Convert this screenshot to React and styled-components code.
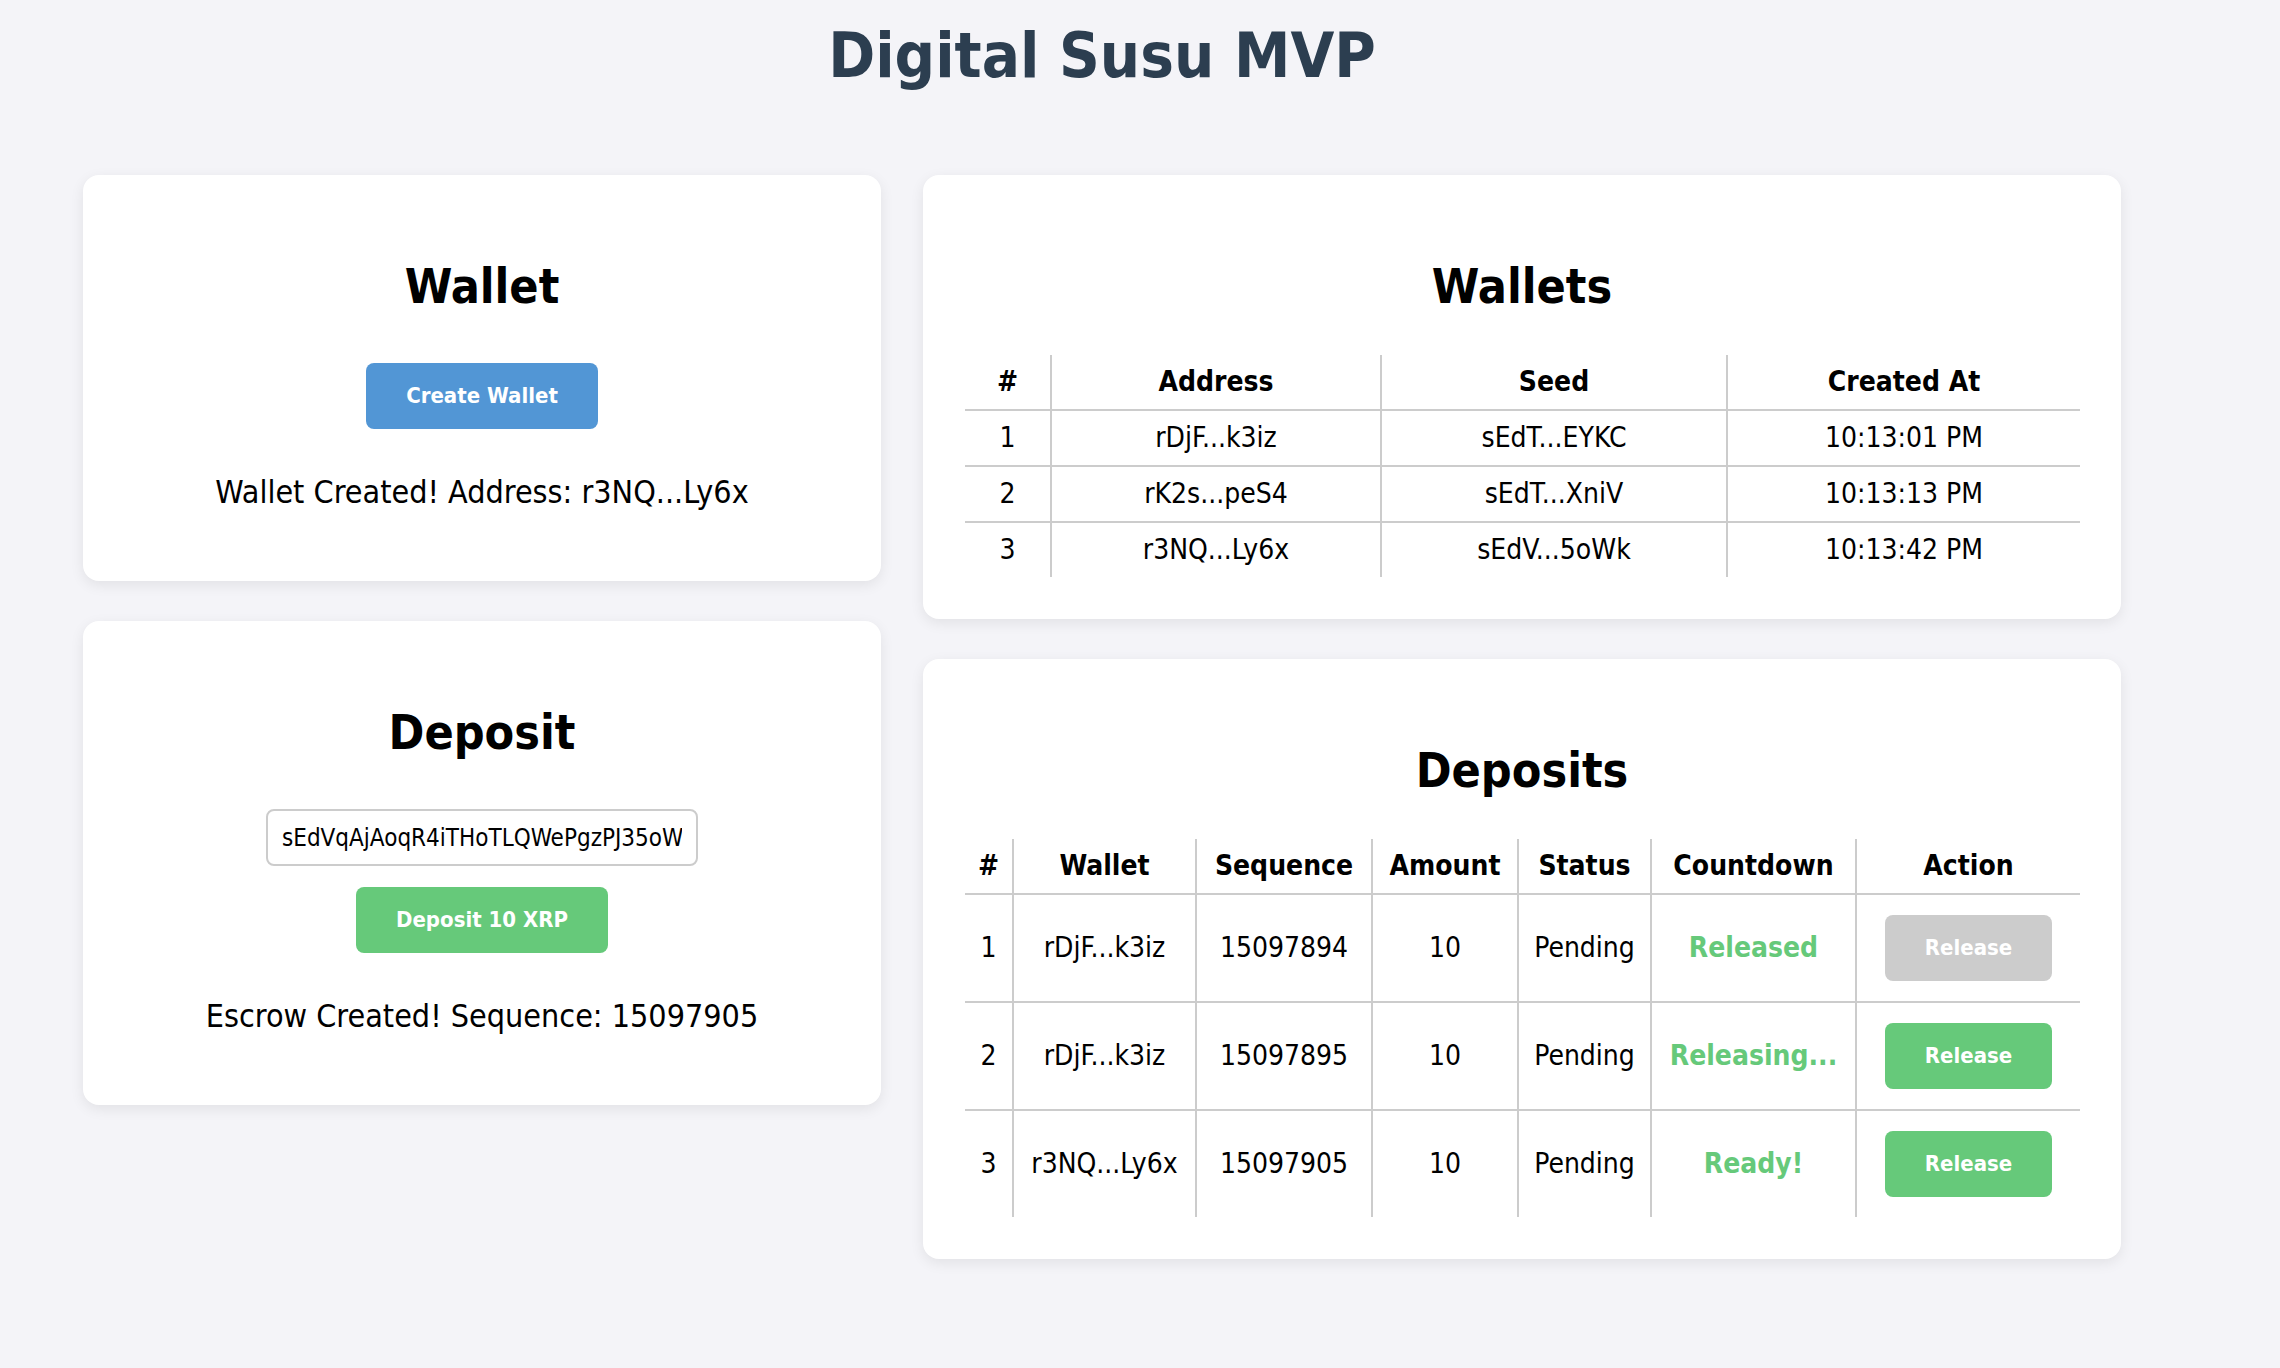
import React from "react";
import styled, { createGlobalStyle } from "styled-components";

const GlobalStyle = createGlobalStyle`
  body {
    margin: 0;
    background-color: #f4f4f8;
    font-family: "DejaVu Sans Condensed", "DejaVu Sans", sans-serif;
    color: #000;
  }
`;

const Page = styled.div`
  width: 2038px;
  margin-left: 83px;
  padding-top: 18px;
  padding-bottom: 80px;
`;

const Title = styled.h1`
  margin: 0 0 81px;
  font-size: 63px;
  line-height: 76px;
  font-weight: bold;
  text-align: center;
  color: #2c3e50;
`;

const Columns = styled.div`
  display: flex;
  align-items: flex-start;
  gap: 42px;
`;

const Column = styled.div`
  display: flex;
  flex-direction: column;
  gap: 40px;
  width: ${({ $w }) => $w}px;
`;

const Card = styled.div`
  background-color: #fff;
  border-radius: 16px;
  box-shadow: 0 4px 14px rgba(0, 0, 0, 0.08);
  padding: 0 42px 42px;
  text-align: center;
`;

const Heading = styled.h2`
  margin: 82px 0 40px;
  font-size: 48px;
  line-height: 58px;
  font-weight: bold;
`;

const Form = styled.div`
  display: flex;
  flex-direction: column;
  align-items: center;
  gap: 21px;
  padding-top: 8px;
`;

const Input = styled.input`
  box-sizing: border-box;
  width: 432px;
  height: 57px;
  padding: 0 14px;
  border: 2px solid #ccc;
  border-radius: 8px;
  font-family: inherit;
  font-size: 24px;
  color: #000;
  outline: none;
`;

const colors = {
  blue: "#5296d5",
  green: "#66c97a",
  grey: "#cccccc",
};

const Button = styled.button`
  padding: 20px 40px;
  border: none;
  border-radius: 8px;
  background-color: ${({ $color }) => colors[$color]};
  color: #fff;
  font-family: inherit;
  font-size: 22px;
  line-height: 26px;
  font-weight: bold;
  cursor: ${({ disabled }) => (disabled ? "not-allowed" : "pointer")};
  margin: ${({ $inTable }) => ($inTable ? "8px 0" : "0")};
`;

const Message = styled.p`
  margin: 43px 0 27px;
  font-size: 32px;
  line-height: 40px;
`;

const Table = styled.table`
  width: 100%;
  table-layout: fixed;
  border-collapse: collapse;
  border-style: hidden;
  font-size: 28px;
`;

const Th = styled.th`
  box-sizing: border-box;
  width: ${({ $w }) => $w}px;
  padding: 12px 4px;
  line-height: 30px;
  font-weight: bold;
  border: 2px solid #ccc;
  white-space: nowrap;
`;

const Td = styled.td`
  padding: 12px 4px;
  line-height: 30px;
  border: 2px solid #ccc;
  white-space: nowrap;
  vertical-align: middle;
`;

const Countdown = styled.span`
  color: #66c97a;
  font-weight: bold;
`;

const wallets = [
  { address: "rDjF...k3iz", seed: "sEdT...EYKC", created: "10:13:01 PM" },
  { address: "rK2s...peS4", seed: "sEdT...XniV", created: "10:13:13 PM" },
  { address: "r3NQ...Ly6x", seed: "sEdV...5oWk", created: "10:13:42 PM" },
];

const deposits = [
  { wallet: "rDjF...k3iz", sequence: 15097894, amount: 10, status: "Pending", countdown: "Released", released: true },
  { wallet: "rDjF...k3iz", sequence: 15097895, amount: 10, status: "Pending", countdown: "Releasing...", released: false },
  { wallet: "r3NQ...Ly6x", sequence: 15097905, amount: 10, status: "Pending", countdown: "Ready!", released: false },
];

const App = () => {
  return (
    <>
      <GlobalStyle />
      <Page>
        <Title>Digital Susu MVP</Title>
        <Columns>
          <Column $w={798}>
            <Card>
              <Heading>Wallet</Heading>
              <Form>
                <Button $color="blue">Create Wallet</Button>
              </Form>
              <Message>Wallet Created! Address: r3NQ...Ly6x</Message>
            </Card>
            <Card>
              <Heading>Deposit</Heading>
              <Form>
                <Input defaultValue="sEdVqAjAoqR4iTHoTLQWePgzPJ35oWk" />
                <Button $color="green">Deposit 10 XRP</Button>
              </Form>
              <Message>Escrow Created! Sequence: 15097905</Message>
            </Card>
          </Column>
          <Column $w={1198}>
            <Card>
              <Heading>Wallets</Heading>
              <Table>
                <thead>
                  <tr>
                    <Th $w={86}>#</Th>
                    <Th $w={330}>Address</Th>
                    <Th $w={346}>Seed</Th>
                    <Th $w={353}>Created At</Th>
                  </tr>
                </thead>
                <tbody>
                  {wallets.map((w, i) => (
                    <tr key={i}>
                      <Td>{i + 1}</Td>
                      <Td>{w.address}</Td>
                      <Td>{w.seed}</Td>
                      <Td>{w.created}</Td>
                    </tr>
                  ))}
                </tbody>
              </Table>
            </Card>
            <Card>
              <Heading>Deposits</Heading>
              <Table>
                <thead>
                  <tr>
                    <Th $w={48}>#</Th>
                    <Th $w={183}>Wallet</Th>
                    <Th $w={176}>Sequence</Th>
                    <Th $w={146}>Amount</Th>
                    <Th $w={133}>Status</Th>
                    <Th $w={205}>Countdown</Th>
                    <Th $w={224}>Action</Th>
                  </tr>
                </thead>
                <tbody>
                  {deposits.map((d, i) => (
                    <tr key={i}>
                      <Td>{i + 1}</Td>
                      <Td>{d.wallet}</Td>
                      <Td>{d.sequence}</Td>
                      <Td>{d.amount}</Td>
                      <Td>{d.status}</Td>
                      <Td>
                        <Countdown>{d.countdown}</Countdown>
                      </Td>
                      <Td>
                        <Button
                          $inTable
                          $color={d.released ? "grey" : "green"}
                          disabled={d.released}
                        >
                          Release
                        </Button>
                      </Td>
                    </tr>
                  ))}
                </tbody>
              </Table>
            </Card>
          </Column>
        </Columns>
      </Page>
    </>
  );
};

export default App;
